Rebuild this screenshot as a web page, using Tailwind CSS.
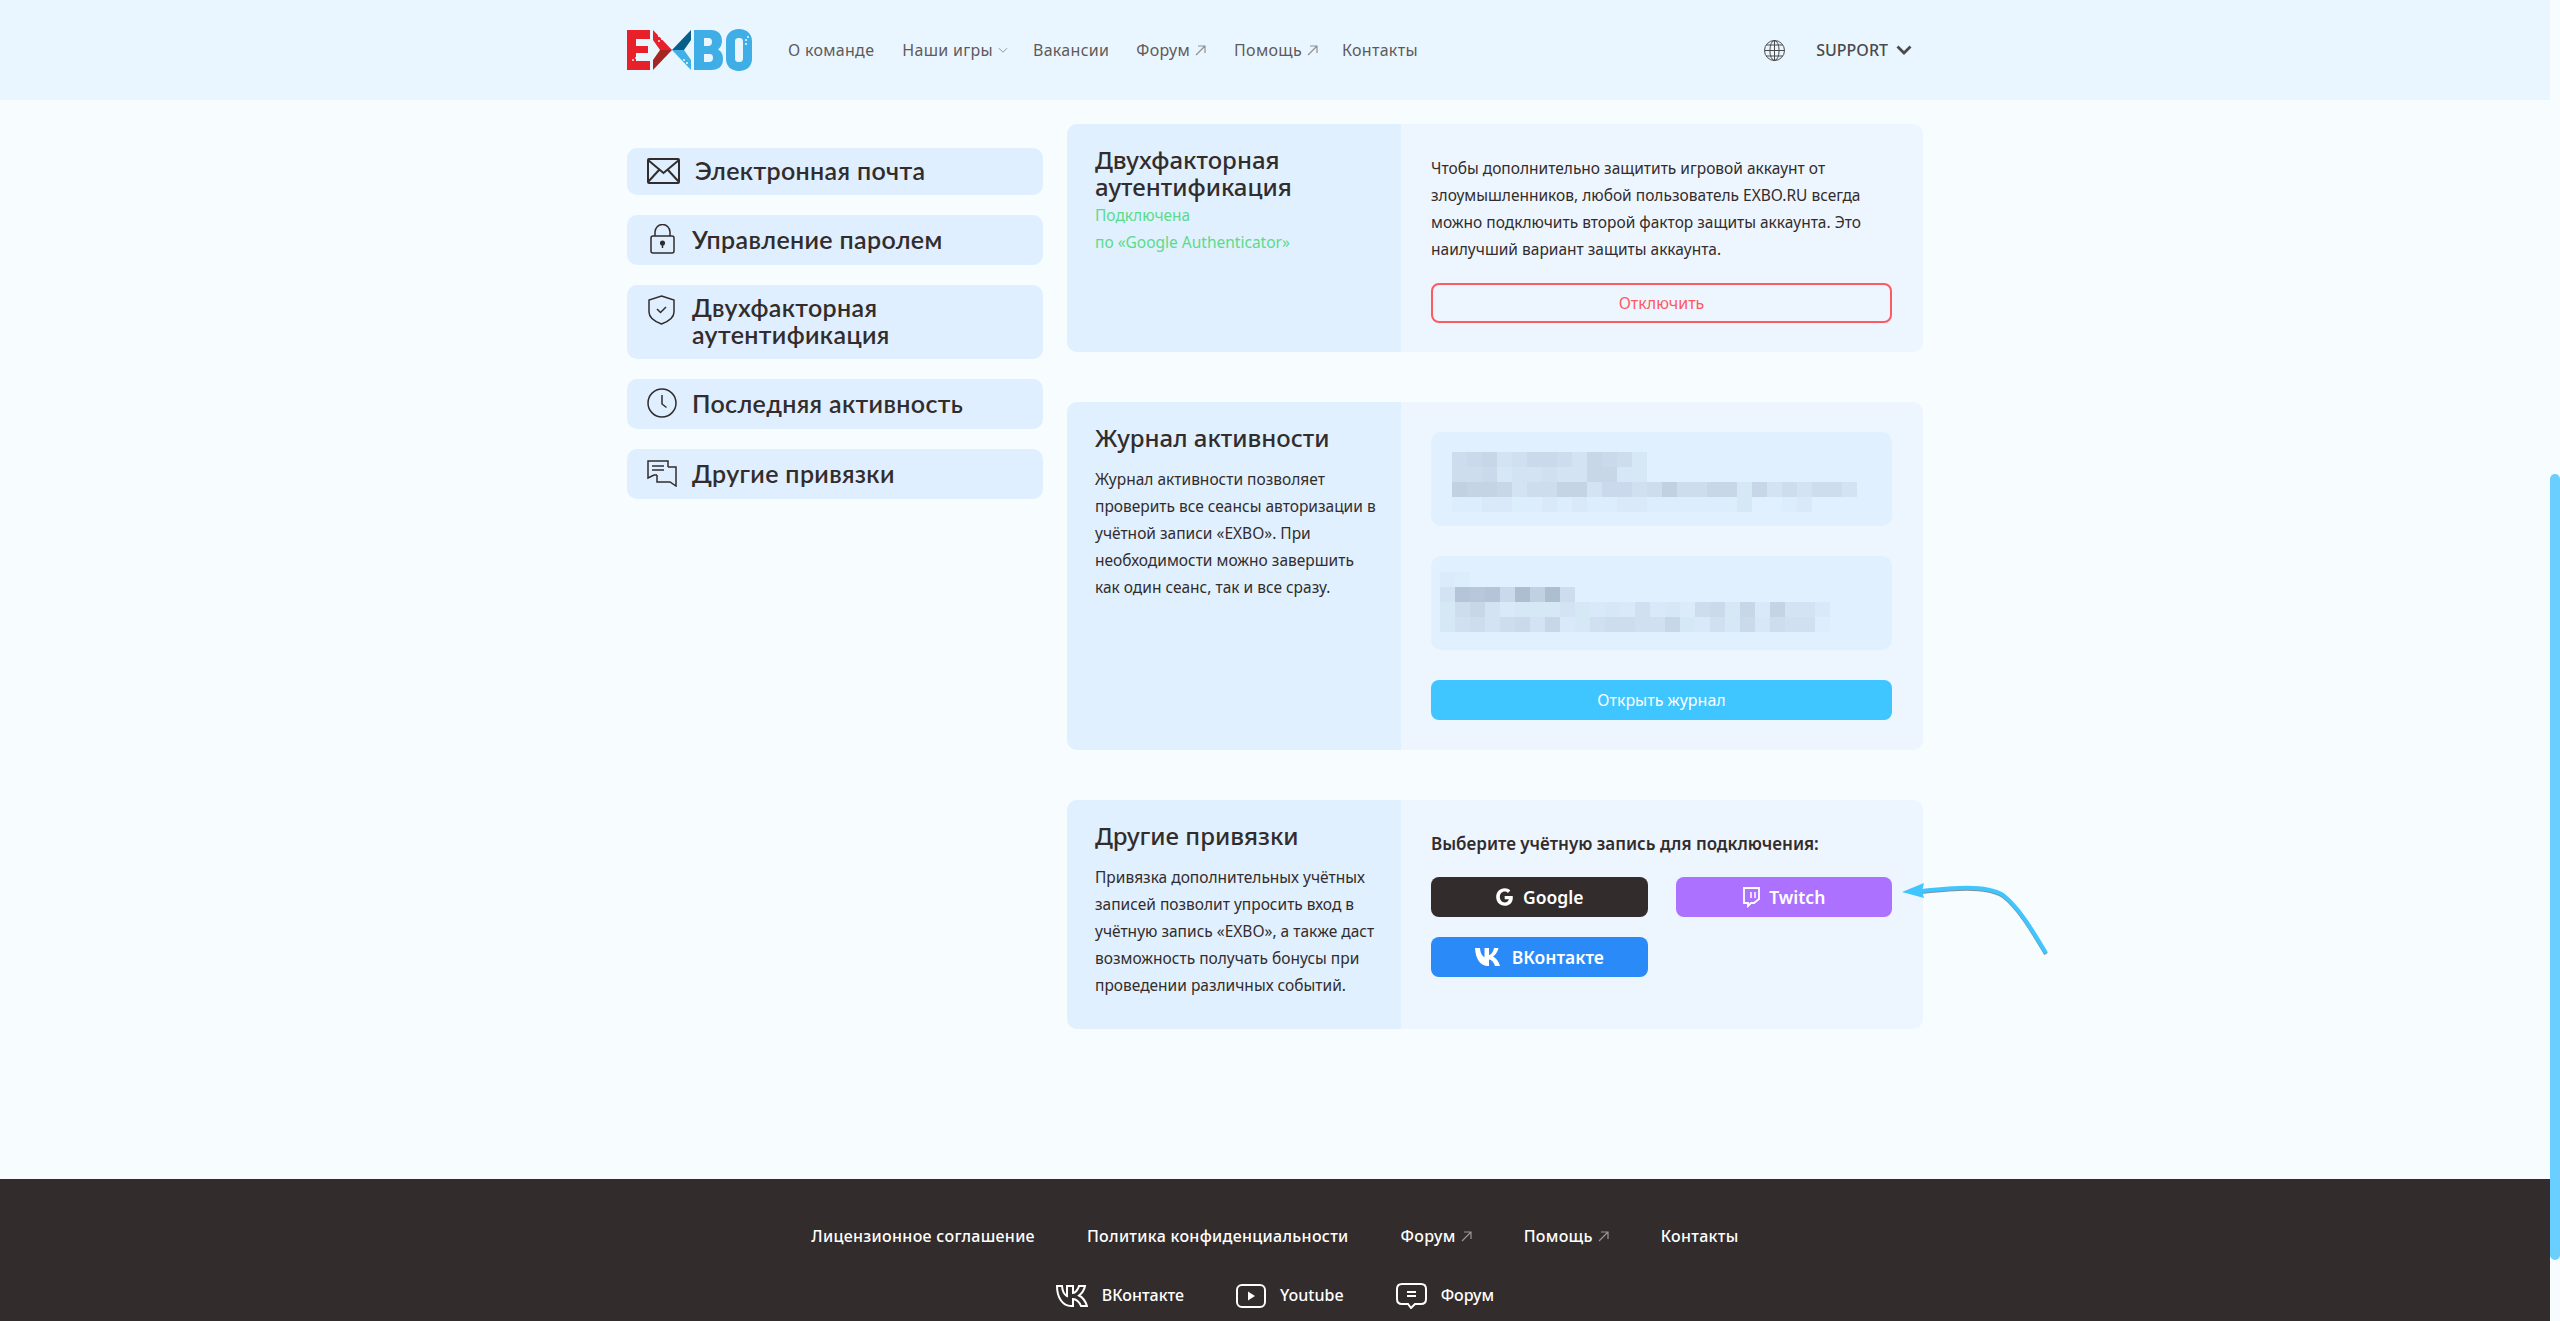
<!DOCTYPE html>
<html lang="ru">
<head>
  <meta charset="UTF-8" />
  <title>EXBO</title>
  <script src="https://cdn.jsdelivr.net/npm/@tailwindcss/browser@4"></script>
</head>
<body class="relative h-[1321px] w-[2560px] overflow-hidden bg-[#f7fdff] font-['Noto_Sans',sans-serif] text-[#332c2c]">

  <!-- Header -->
  <header class="flex h-[100px] w-[2550px] items-center bg-[#eaf6ff] pl-[626px] pr-[638px] text-[16px] text-[#5f5a5a]">
    <svg class="mr-[36px] h-[42px] w-[126px] shrink-0" viewBox="0 0 126 42">
      <path d="M1 1H24V10H10V17H22V24H10V32H24V41H1Z" fill="#e8202a"/>
      <path d="M27 1L46 21H34L27 11Z" fill="#e8202a"/>
      <path d="M34 21H46L27 41V31Z" fill="#a52522"/>
      <path d="M65 1V11L58 21H46Z" fill="#075e89"/>
      <path d="M46 21H58L65 31V41Z" fill="#3fb0e8"/>
      <path d="M68 1H85C93 1 96 6 96 12C96 16 94 19 92 20.500C95 22 97 25 97 30C97 37 93 41 85 41H68ZM78 9V17H82C85 17 86 15 86 13C86 10 85 9 82 9ZM78 25V33H83C86 33 87 31 87 29C87 26 86 25 83 25Z" fill="#3fade6" fill-rule="evenodd"/>
      <path d="M113 0C121 0 126 5 126 12V30C126 37 121 42 113 42C105 42 100 37 100 30V12C100 5 105 0 113 0ZM113 9C110 9 109 10 109 13V29C109 32 110 33 113 33C116 33 117 32 117 29V13C117 10 116 9 113 9Z" fill="#3fade6" fill-rule="evenodd"/>
      <path d="M6 30h2v2H6zM9 28h2v2H9zM32 6h2v2h-2zM35 9h2v2h-2zM32 11h2v2h-2zM57 30h2v2h-2zM60 33h2v2h-2zM119 10h2v2h-2zM121 7h2v2h-2zM119 14h2v2h-2z" fill="#fff" fill-opacity=".7"/>
    </svg>
    <nav class="flex items-center tracking-[0.3px]">
      <a class="mr-[28px]">О команде</a>
      <a class="mr-[25px] flex items-center">Наши игры
        <svg class="ml-[5px] h-[8px] w-[10px]" viewBox="0 0 11 8" fill="none" stroke="#8f8f8f"><path d="M1 2l4.500 4.500L10 2"/></svg>
      </a>
      <a class="mr-[27px]">Вакансии</a>
      <a class="mr-[28px] flex items-center">Форум
        <svg class="ml-[5px] h-[11px] w-[11px]" viewBox="0 0 11 11" fill="none" stroke="#8f8f8f" stroke-width="1.200"><path d="M1 10L10 1M3 1h7v7"/></svg>
      </a>
      <a class="mr-[24px] flex items-center">Помощь
        <svg class="ml-[5px] h-[11px] w-[11px]" viewBox="0 0 11 11" fill="none" stroke="#8f8f8f" stroke-width="1.200"><path d="M1 10L10 1M3 1h7v7"/></svg>
      </a>
      <a>Контакты</a>
    </nav>
    <div class="ml-auto flex items-center">
      <svg class="mr-[31px] h-[21px] w-[21px]" viewBox="0 0 21 21" fill="none" stroke="#4a4a4a" stroke-width="1">
        <circle cx="10.500" cy="10.500" r="10"/><ellipse cx="10.500" cy="10.500" rx="4.600" ry="10"/>
        <path d="M10.500 .5v20M.5 10.500h20M2.200 5h16.600M2.200 16h16.600"/>
      </svg>
      <span class="font-medium text-[#4a4a4a]">SUPPORT</span>
      <svg class="ml-[8px] h-[10px] w-[16px]" viewBox="0 0 16 10" fill="none" stroke="#4a4a4a" stroke-width="2.800"><path d="M1.500 1.500l6.500 6.500 6.500-6.500"/></svg>
    </div>
  </header>

  <main class="flex w-[2550px] items-start pl-[627px] pt-[24px]">

    <!-- Sidebar -->
    <aside class="mr-[24px] mt-[24px] flex w-[416px] flex-col gap-[20px] font-['Lato',sans-serif] text-[25px] font-semibold leading-[27px] tracking-[0.35px]">
      <a class="flex h-[47px] items-center rounded-[10px] bg-[#dfefff] pb-[2px] pl-[20px]">
        <svg class="mr-[15px] h-[26px] w-[33px] shrink-0" viewBox="0 0 33 26" fill="none" stroke="#332c2c" stroke-width="2">
          <rect x="1" y="1" width="31" height="24" rx="1"/><path d="M1 2l15.500 13L32 2M1 24l11-12M32 24L21 12"/>
        </svg>
        Электронная почта
      </a>
      <a class="flex h-[50px] items-center rounded-[10px] bg-[#dfefff] pb-[2px] pl-[23px]">
        <svg class="mr-[17px] h-[30px] w-[25px] shrink-0" viewBox="0 0 25 30" fill="none" stroke="#332c2c" stroke-width="1.500">
          <rect x="1" y="12" width="23" height="17" rx="2"/><path d="M5 12V8a7.500 7.500 0 0 1 15 0v4"/>
          <circle cx="12.500" cy="19" r="1.800" fill="#332c2c"/><path d="M12.500 20v4"/>
        </svg>
        Управление паролем
      </a>
      <a class="flex h-[74px] items-start rounded-[10px] bg-[#dfefff] pl-[21px] pt-[9px]">
        <svg class="mr-[17px] mt-[1px] h-[30px] w-[27px] shrink-0" viewBox="0 0 27 30" fill="none" stroke="#332c2c" stroke-width="1.500">
          <path d="M13.500 1L26 5V17C26 23 19 27 13.500 29C8 27 1 23 1 17V5Z"/><path d="M9 14l3.500 3.500L18 12"/>
        </svg>
        <span>Двухфакторная<br />аутентификация</span>
      </a>
      <a class="flex h-[50px] items-center rounded-[10px] bg-[#dfefff] pb-[2px] pl-[20px]">
        <svg class="mr-[15px] h-[30px] w-[30px] shrink-0" viewBox="0 0 30 30" fill="none" stroke="#332c2c" stroke-width="1.500">
          <circle cx="15" cy="15" r="14"/><path d="M15 7v9l4.500 3.500"/>
        </svg>
        Последняя активность
      </a>
      <a class="flex h-[50px] items-center rounded-[10px] bg-[#dfefff] pb-[2px] pl-[20px]">
        <svg class="mr-[15px] h-[27px] w-[30px] shrink-0" viewBox="0 0 30 27" fill="none" stroke="#332c2c" stroke-width="1.500">
          <path d="M21 7V1H1V18l6-3H10M5 6h12M5 10h12"/><path d="M21 7H29V26l-6-4H10V15"/>
        </svg>
        Другие привязки
      </a>
    </aside>

    <!-- Cards -->
    <section class="flex w-[856px] flex-col gap-[50px] text-[15.500px] leading-[27px]">
      <div class="flex h-[228px] overflow-hidden rounded-[10px] bg-[#edf6ff]">
        <div class="w-[334px] shrink-0 bg-[#e0f0ff] pl-[28px] pt-[22px]">
          <h2 class="text-[24px] font-medium leading-[27px]">Двухфакторная<br />аутентификация</h2>
          <p class="mt-[2px] text-[#5bdb8a]">Подключена<br />по «Google Authenticator»</p>
        </div>
        <div class="flex-1 pl-[30px] pr-[31px] pt-[31px]">
          <p>Чтобы дополнительно защитить игровой аккаунт от<br />злоумышленников, любой пользователь EXBO.RU всегда<br />можно подключить второй фактор защиты аккаунта. Это<br />наилучший вариант защиты аккаунта.</p>
          <button class="mt-[20px] h-[40px] w-full rounded-[8px] border-2 border-[#ff5a5f] text-[16px] text-[#ff5a5f]">Отключить</button>
        </div>
      </div>

      <div class="flex h-[348px] overflow-hidden rounded-[10px] bg-[#edf6ff]">
        <div class="w-[334px] shrink-0 bg-[#e0f0ff] pl-[28px] pt-[22px]">
          <h2 class="text-[24px] font-medium leading-[27px]">Журнал активности</h2>
          <p class="mt-[15px] whitespace-nowrap">Журнал активности позволяет<br />проверить все сеансы авторизации в<br />учётной записи «EXBO». При<br />необходимости можно завершить<br />как один сеанс, так и все сразу.</p>
        </div>
        <div class="flex-1 pl-[30px] pr-[31px] pt-[30px]">
          <div class="h-[94px] overflow-hidden rounded-[10px] bg-[#e0f0ff] pl-[21px] pt-[20px]" data-mosaic="a"></div>
          <div class="mt-[30px] h-[94px] overflow-hidden rounded-[10px] bg-[#e0f0ff] pl-[9px] pt-[16px]" data-mosaic="b"></div>
          <button class="mt-[30px] h-[40px] w-full rounded-[8px] bg-[#3fc5ff] text-[16px] text-white">Открыть журнал</button>
        </div>
      </div>

      <div class="flex h-[229px] overflow-hidden rounded-[10px] bg-[#edf6ff]">
        <div class="w-[334px] shrink-0 bg-[#e0f0ff] pl-[28px] pt-[22px]">
          <h2 class="text-[24px] font-medium leading-[27px]">Другие привязки</h2>
          <p class="mt-[15px] whitespace-nowrap">Привязка дополнительных учётных<br />записей позволит упросить вход в<br />учётную запись «EXBO», а также даст<br />возможность получать бонусы при<br />проведении различных событий.</p>
        </div>
        <div class="flex-1 pl-[30px] pr-[31px] pt-[30px]">
          <p class="text-[17px] font-semibold">Выберите учётную запись для подключения:</p>
          <div class="mt-[20px] grid grid-cols-2 gap-x-[28px] gap-y-[20px] text-[17.500px] font-semibold text-white">
            <button class="flex h-[40px] items-center justify-center rounded-[8px] bg-[#332c2c]">
              <svg class="mr-[9px] h-[20px] w-[19px]" viewBox="0 0 24 24" fill="#fff"><path d="M12.200 1C15.100 1 17.500 2 19.400 3.700L16.200 6.800C15.100 5.800 13.700 5.200 12.200 5.200C8.800 5.200 6.100 8.200 6.100 12C6.100 15.800 8.800 18.800 12.200 18.800C15.300 18.800 17 17 17.400 14.800H12.200V10.600H22.300C22.500 11.300 22.500 12 22.500 12.800C22.500 19 18.200 23 12.200 23C6 23 1.500 18.100 1.500 12C1.500 5.900 6 1 12.200 1Z"/></svg>
              Google
            </button>
            <button class="flex h-[40px] items-center justify-center rounded-[8px] bg-[#ac71ff]">
              <svg class="mr-[9px] h-[21px] w-[18px]" viewBox="0 0 18 21" fill="none" stroke="#fff" stroke-width="1.800"><path d="M2 1H17V12L12 16H9L6 19V16H2Z"/><path d="M9 5v6M13 5v6" stroke-width="1.500"/></svg>
              Twitch
            </button>
            <button class="flex h-[40px] items-center justify-center rounded-[8px] bg-[#2a8af8]">
              <svg class="mr-[9px] h-[20px] w-[28px]" viewBox="0 0 28 20" fill="#fff"><path d="M0 1H5C5.300 6 7.400 9.500 9.500 10V1H14V8C16 7.800 18.200 5.300 19 1H23.500C22.800 5 20 8.200 18 9.500C20 10.500 23.500 13.500 25 19H20C19 15.300 16.500 12.800 14 12.500V19H13C5.500 19 .5 12 0 1Z"/></svg>
              ВКонтакте
            </button>
          </div>
        </div>
      </div>
    </section>
  </main>

  <!-- Footer -->
  <footer class="absolute left-0 top-[1179px] h-[142px] w-[2550px] bg-[#332c2c] pt-[44px] text-[16px] leading-[27px] text-white">
    <div class="flex justify-center gap-[52px] font-medium tracking-[0.3px]">
      <a>Лицензионное соглашение</a>
      <a>Политика конфиденциальности</a>
      <a class="flex items-center">Форум <svg class="ml-[5px] h-[11px] w-[11px]" viewBox="0 0 11 11" fill="none" stroke="#9a9595" stroke-width="1.200"><path d="M1 10L10 1M3 1h7v7"/></svg></a>
      <a class="flex items-center">Помощь <svg class="ml-[5px] h-[11px] w-[11px]" viewBox="0 0 11 11" fill="none" stroke="#9a9595" stroke-width="1.200"><path d="M1 10L10 1M3 1h7v7"/></svg></a>
      <a>Контакты</a>
    </div>
    <div class="mt-[32px] flex justify-center gap-[52px] font-medium">
      <a class="flex items-center gap-[14px]">
        <svg class="h-[24px] w-[32px]" viewBox="0 0 32 24" fill="none" stroke="#fff" stroke-width="2"><path d="M1 2H6C6.500 8 9 11 11 12V2H17V9C19 9 22 6 23 2H29C28 7 25 10 23 11.500C25 12.500 29 16 31 22H25C23.500 18 20 15 17 15V22H15C7 22 1 14 1 2Z"/></svg>
        ВКонтакте
      </a>
      <a class="flex items-center gap-[14px]">
        <svg class="h-[24px] w-[30px]" viewBox="0 0 30 24" fill="none" stroke="#fff" stroke-width="2"><rect x="1" y="1" width="28" height="22" rx="5"/><path d="M12 7.500L19 12L12 16.500Z" fill="#fff" stroke="none"/></svg>
        Youtube
      </a>
      <a class="flex items-center gap-[14px]">
        <svg class="h-[26px] w-[31px]" viewBox="0 0 31 26" fill="none" stroke="#fff" stroke-width="2"><path d="M6 1H25C28 1 30 3 30 6V16C30 19 28 21 25 21H19L15 25L12 21H6C3 21 1 19 1 16V6C1 3 3 1 6 1Z"/><path d="M11 9H20M11 13H20"/></svg>
        Форум
      </a>
    </div>
  </footer>

  <!-- Scrollbar -->
  <div class="absolute left-[2550px] top-[474px] h-[786px] w-[10px] rounded-full bg-[#6acfff]"></div>

  <!-- Arrow over the page -->
  <svg class="absolute left-[1895px] top-[875px] h-[85px] w-[155px]" viewBox="0 0 155 85" fill="none">
    <path d="M27 17C55 14 90 10 108 21C125 34 140 61 151 79" stroke="#7f8f99" stroke-width="4"/>
    <path d="M27 16C55 13 90 9 108 20C125 33 140 60 151 78" stroke="#3fc5ff" stroke-width="4"/>
    <path d="M7 17L29 8L27 16L29 23Z" fill="#3fc5ff"/>
  </svg>

  <script>
    // blurred rows of the activity log, one shade per 15px tile (0 = empty)
    const mosaic = {
      a: [
        [3,3.5,4,2,2.5,3.5,3.5,3,2,4,3.5,3,1.5],
        [3,3,3.5,1.5,2,2,2.5,2,2,4,4,1.5,1.5],
        [5,4.5,4.5,4,2,3,3,4.5,4.5,2,3.5,3.5,2.5,3,5,3,3,4,4,1.5,4,2,3,2,3,3,2],
        [.5,.5,1,1,.5,.5,1,.5,1,.5,.5,1,1,.5,.5,.5,.5,.5,.5,1.5,0,0,.5,1,0,0]
      ],
      b: [
        [.7,.5],
        [2,7,6.5,7,3.5,8,5,8,3],
        [1.5,3,4,2,1,1.5,1.5,1.5,2,1.5,1,1.5,1,2.5,1,1.5,.8,3,3.5,1.5,4,1,4.5,2,2,1],
        [1.5,2.5,3,2,3,3.5,2,4,1,1.5,2.5,3,3,2.5,2.5,4,1.5,1,2.5,1.5,3.5,1.5,3,2.5,2.5,.5]
      ]
    };
    document.querySelectorAll("[data-mosaic]").forEach(box => {
      mosaic[box.dataset.mosaic].forEach(row => {
        const line = document.createElement("div");
        line.className = "flex h-[15px]";
        row.forEach(v => {
          const tile = document.createElement("div");
          tile.className = "h-[15px] w-[15px] shrink-0";
          tile.style.background = "rgba(100,115,140," + v * 0.05 + ")";
          line.appendChild(tile);
        });
        box.appendChild(line);
      });
    });
  </script>
</body>
</html>
